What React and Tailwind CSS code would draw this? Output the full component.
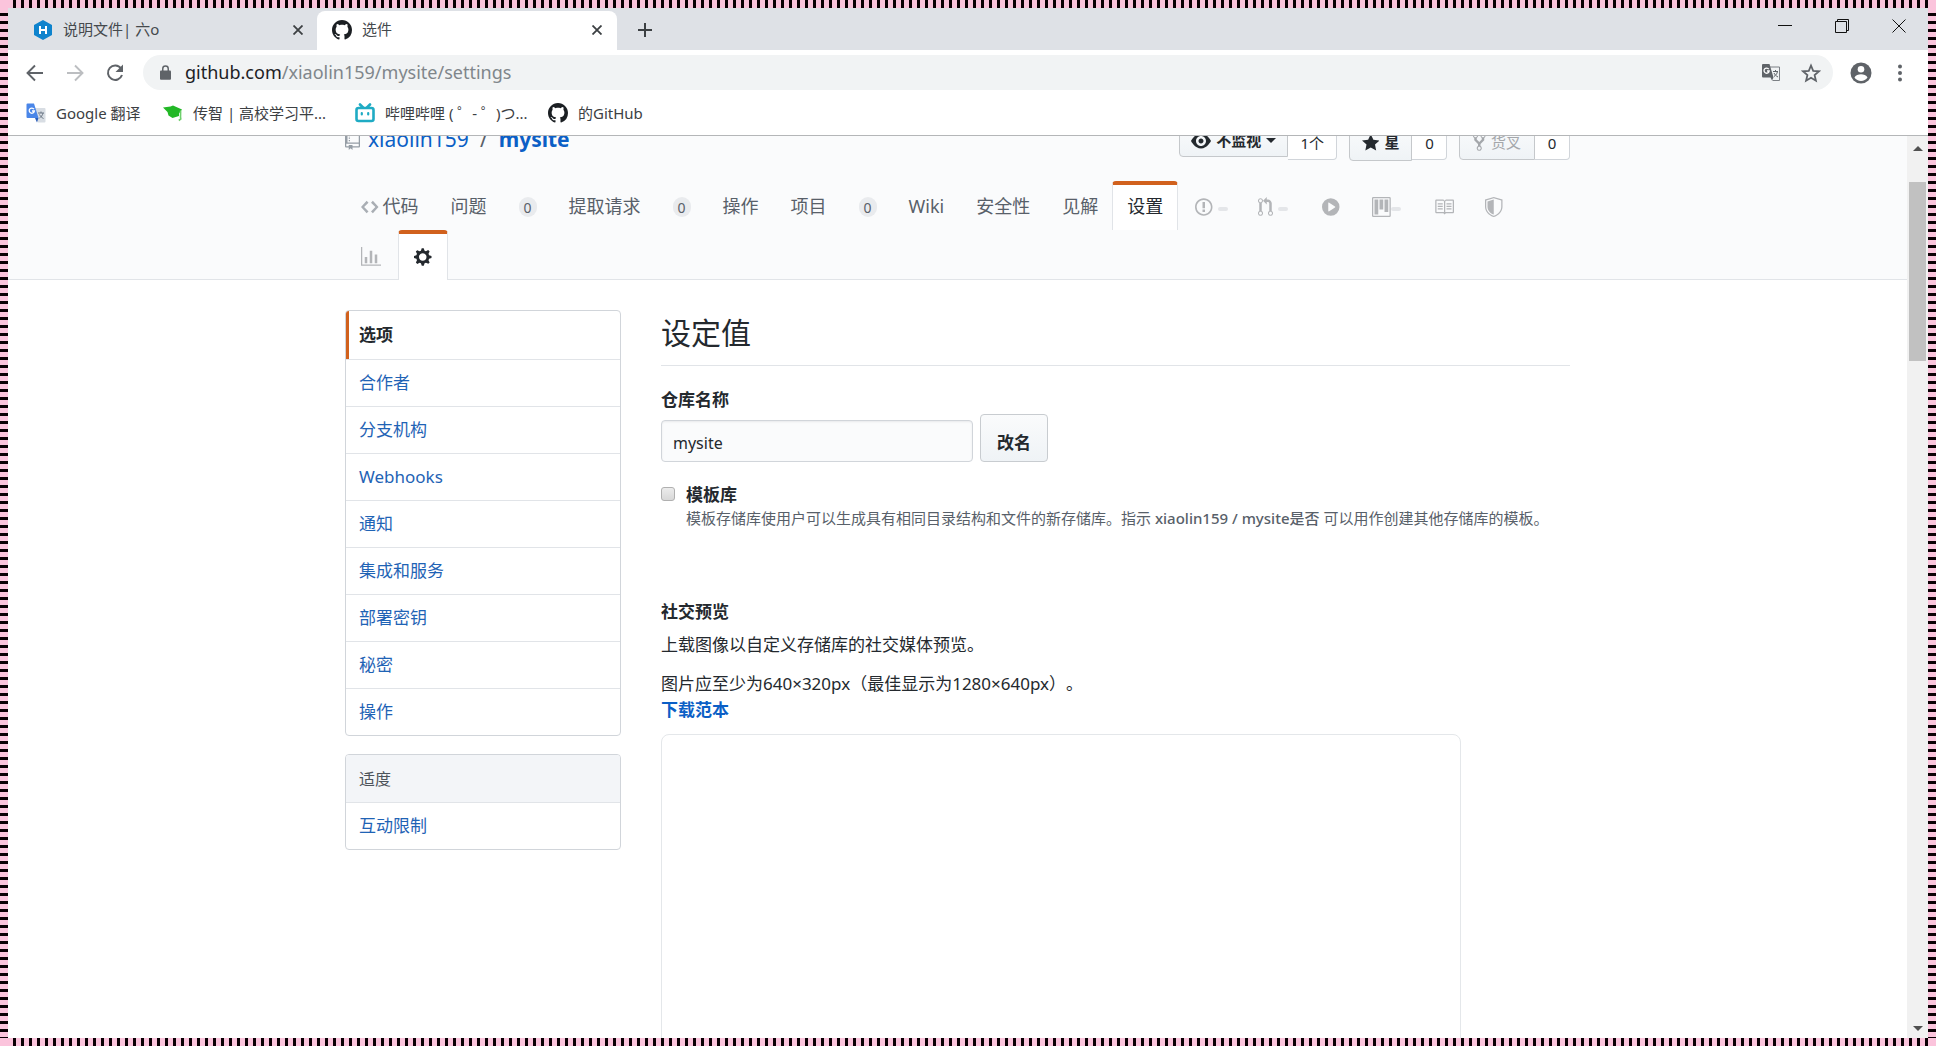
import React from "react";

const OCTICONS = {
  github: { w: 16, d: "M8 0C3.58 0 0 3.58 0 8c0 3.54 2.29 6.53 5.47 7.59.4.07.55-.17.55-.38 0-.19-.01-.82-.01-1.49-2.01.37-2.53-.49-2.69-.94-.09-.23-.48-.94-.82-1.13-.28-.15-.68-.52-.01-.53.63-.01 1.08.58 1.23.82.72 1.21 1.87.87 2.33.66.07-.52.28-.87.51-1.07-1.78-.2-3.64-.89-3.64-3.95 0-.87.31-1.59.82-2.15-.08-.2-.36-1.02.08-2.12 0 0 .67-.21 2.2.82.64-.18 1.32-.27 2-.27.68 0 1.36.09 2 .27 1.53-1.04 2.2-.82 2.2-.82.44 1.1.16 1.92.08 2.12.51.56.82 1.27.82 2.15 0 3.07-1.87 3.75-3.65 3.95.29.25.54.73.54 1.48 0 1.07-.01 1.93-.01 2.2 0 .21.15.46.55.38A8.013 8.013 0 0016 8c0-4.42-3.58-8-8-8z" },
  repo: { w: 12, d: "M4 9H3V8h1v1zm0-3H3v1h1V6zm0-2H3v1h1V4zm0-2H3v1h1V2zm8-1v12c0 .55-.45 1-1 1H6v2l-1.5-1.5L3 16v-2H1c-.55 0-1-.45-1-1V1c0-.55.45-1 1-1h10c.55 0 1 .45 1 1zm-1 10H1v2h2v-1h3v1h5v-2zm0-10H2v9h9V1z" },
  code: { w: 14, d: "M9.5 3L8 4.5 11.5 8 8 11.5 9.5 13 14 8 9.5 3zm-5 0L0 8l4.5 5L6 11.5 2.5 8 6 4.5 4.5 3z" },
  issue: { w: 14, d: "M7 2.3c3.14 0 5.7 2.56 5.7 5.7s-2.56 5.7-5.7 5.7A5.71 5.71 0 011.3 8c0-3.14 2.56-5.7 5.7-5.7zM7 1C3.14 1 0 4.14 0 8s3.14 7 7 7 7-3.14 7-7-3.14-7-7-7zm1 3H6v5h2V4zm0 6H6v2h2v-2z" },
  pull: { w: 12, d: "M11 11.28V5c-.03-.78-.34-1.47-.94-2.06C9.46 2.35 8.78 2.03 8 2H7V0L4 3l3 3V4h1c.27.02.48.11.69.31.21.2.3.42.31.69v6.28A1.993 1.993 0 0010 15a1.993 1.993 0 001-3.72zm-1 2.92c-.66 0-1.2-.55-1.2-1.2 0-.65.55-1.2 1.2-1.2.65 0 1.2.55 1.2 1.2 0 .65-.55 1.2-1.2 1.2zM4 3c0-1.11-.89-2-2-2a1.993 1.993 0 00-1 3.72v6.56A1.993 1.993 0 002 15a1.993 1.993 0 001-3.72V4.72c.59-.34 1-.98 1-1.72zm-.8 10c0 .66-.55 1.2-1.2 1.2-.65 0-1.2-.55-1.2-1.2 0-.65.55-1.2 1.2-1.2.65 0 1.2.55 1.2 1.2zM2 4.2C1.34 4.2.8 3.65.8 3c0-.65.55-1.2 1.2-1.2.65 0 1.2.55 1.2 1.2 0 .65-.55 1.2-1.2 1.2z" },
  play: { w: 14, d: "M14 8A7 7 0 110 8a7 7 0 0114 0zm-8.223 3.482l4.599-3.066a.5.5 0 000-.832L5.777 4.518A.5.5 0 005 4.934v6.132a.5.5 0 00.777.416z" },
  project: { w: 15, d: "M10 12h3V2h-3v10zm-4-2h3V2H6v8zm-4 4h3V2H2v12zm-1 1h13V1H1v14zM14 0H1a1 1 0 00-1 1v14a1 1 0 001 1h13a1 1 0 001-1V1a1 1 0 00-1-1z" },
  book: { w: 16, d: "M3 5h4v1H3V5zm0 3h4V7H3v1zm0 2h4V9H3v1zm11-5h-4v1h4V5zm0 2h-4v1h4V7zm0 2h-4v1h4V9zm2-6v9c0 .55-.45 1-1 1H9.5l-1 1-1-1H2c-.55 0-1-.45-1-1V3c0-.55.45-1 1-1h5.5l1 1 1-1H15c.55 0 1 .45 1 1zm-8 .5L7.5 3H2v9h6V3.5zm7-.5H9.5l-.5.5V12h6V3z" },
  shield: { w: 14, d: "M0 2l7-2 7 2v6.02C14 12.69 8.69 16 7 16c-1.69 0-7-3.31-7-7.98V2zm1 .75L7 1l6 1.75v5.268C13 12.104 8.449 15 7 15c-1.449 0-6-2.896-6-6.982V2.75zm1 .75L7 2v12c-1.207 0-5-2.482-5-5.985V3.5z" },
  graph: { w: 16, d: "M16 14v1H0V0h1v14h15zM5 13H3V8h2v5zm4 0H7V3h2v10zm4 0h-2V6h2v7z" },
  gear: { w: 14, d: "M14 8.77v-1.6l-1.94-.64-.45-1.09.88-1.84-1.13-1.13-1.81.91-1.09-.45-.69-1.92h-1.6l-.63 1.94-1.11.45-1.84-.88-1.13 1.13.91 1.81-.45 1.09L0 7.23v1.59l1.94.64.45 1.09-.88 1.84 1.13 1.13 1.81-.91 1.09.45.69 1.92h1.59l.63-1.94 1.11-.45 1.84.88 1.13-1.13-.92-1.81.47-1.09L14 8.75v.02zM7 11c-1.66 0-3-1.34-3-3s1.34-3 3-3 3 1.34 3 3-1.34 3-3 3z" },
  eye: { w: 16, d: "M8.06 2C3 2 0 8 0 8s3 6 8.06 6C13 14 16 8 16 8s-3-6-7.94-6zM8 12c-2.2 0-4-1.78-4-4 0-2.2 1.8-4 4-4 2.22 0 4 1.8 4 4 0 2.22-1.78 4-4 4zm2-4c0 1.11-.89 2-2 2-1.11 0-2-.89-2-2 0-1.11.89-2 2-2 1.11 0 2 .89 2 2z" },
  star: { w: 14, d: "M14 6l-4.9-.64L7 1 4.9 5.36 0 6l3.6 3.26L2.67 14 7 11.67 11.33 14l-.93-4.74L14 6z" },
  fork: { w: 10, d: "M8 1a1.993 1.993 0 00-1 3.72V6L5 8 3 6V4.72A1.993 1.993 0 002 1a1.993 1.993 0 00-1 3.72V6.5l3 3v1.78A1.993 1.993 0 005 15a1.993 1.993 0 001-3.72V9.5l3-3V4.72A1.993 1.993 0 008 1zM2 4.2C1.34 4.2.8 3.65.8 3c0-.65.55-1.2 1.2-1.2.65 0 1.2.55 1.2 1.2 0 .65-.55 1.2-1.2 1.2zm3 10c-.66 0-1.2-.55-1.2-1.2 0-.65.55-1.2 1.2-1.2.65 0 1.2.55 1.2 1.2 0 .65-.55 1.2-1.2 1.2zm3-10c-.66 0-1.2-.55-1.2-1.2 0-.65.55-1.2 1.2-1.2.65 0 1.2.55 1.2 1.2 0 .65-.55 1.2-1.2 1.2z" },
};

function Octicon({ name, className = "h-5" }) {
  const icon = OCTICONS[name];
  return (
    <svg viewBox={`0 0 ${icon.w} 16`} className={`shrink-0 fill-current ${className}`} aria-hidden="true">
      <path fillRule="evenodd" d={icon.d} />
    </svg>
  );
}

function HexoIcon() {
  return (
    <svg viewBox="0 0 18 20" className="w-[18px] shrink-0" aria-hidden="true">
      <path d="M9 0l9 5v10l-9 5-9-5V5z" fill="#0e83cd" />
      <path d="M6 6v8M12 6v8M6 10h6" stroke="#fff" strokeWidth="2" fill="none" />
    </svg>
  );
}

function TranslateIcon() {
  return (
    <svg viewBox="0 0 20 20" className="size-5 shrink-0" aria-hidden="true">
      <path d="M8 5h10.500a1 1 0 011 1v12.500a1 1 0 01-1 1H12z" fill="#d8dde3" />
      <path d="M12 10h6M15 8.500V10M17 10c-.5 2.500-2 4-3.500 5M13.500 11.500c.8 1.500 2 3 4 4" stroke="#6b7785" fill="none" />
      <path d="M1.500.5H8L12.500 15H1.500a1 1 0 01-1-1V1.500a1 1 0 011-1z" fill="#4a86e8" />
      <path d="M9 15h3.500L11 19.500z" fill="#2b5db8" />
      <path d="M8 6.200A2.600 2.600 0 108.400 8H6" stroke="#fff" strokeWidth="1.300" fill="none" />
    </svg>
  );
}

function TranslatePageIcon() {
  return (
    <svg viewBox="0 0 20 20" className="size-5 shrink-0" aria-hidden="true">
      <path d="M8 4h10.500v13.500H11.500" stroke="#7b7f84" fill="none" />
      <path d="M12 8.500h5M14.500 7v1.500M16.500 8.500c-.5 2.500-2 4-3.500 5M13 10c.8 1.500 2 3 4 4" stroke="#5f6368" fill="none" />
      <path d="M2 1h6.500l4 13.500-1.500 3-1.500-3H2a1 1 0 01-1-1V2a1 1 0 011-1z" fill="#5f6368" />
      <path d="M7.800 6.200A2.600 2.600 0 108.200 8H6" stroke="#fff" strokeWidth="1.300" fill="none" />
    </svg>
  );
}

function GraduationCapIcon() {
  return (
    <svg viewBox="0 0 20 18" className="w-5 shrink-0" aria-hidden="true">
      <path d="M0 3.500L7.500 2.500 10 1.500 19 5.500 16 9.500V12L9.500 14 5.500 11.500 4.500 8z" fill="#22b826" />
      <path d="M17.500 6.500c.5 3-.5 5.500.3 8.500l-2 1.500" stroke="#6fcf6d" strokeWidth="1.600" fill="none" />
    </svg>
  );
}

function BilibiliIcon() {
  return (
    <svg viewBox="0 0 20 20" className="size-5 shrink-0" fill="none" stroke="#1fabc4" strokeWidth="2.600" strokeLinecap="round" aria-hidden="true">
      <rect x="1.500" y="5" width="17" height="13" rx="2" />
      <path d="M5 1.500L8 4.500M15 1.500L12 4.500" />
      <path d="M6.800 10v1.500M13.200 10v1.500" strokeWidth="2.200" />
    </svg>
  );
}

function CloseGlyph() {
  return (
    <svg viewBox="0 0 10 10" className="size-[10px]" stroke="#3c4043" strokeWidth="1.800" aria-hidden="true">
      <path d="M.5.5l9 9M9.500.5l-9 9" />
    </svg>
  );
}

function TabStrip() {
  return (
    <div className="flex h-[42px] items-end bg-[#dee1e6] text-[15px] text-[#45494d]">
      <div className="flex h-[39px] w-[309px] items-center pr-[11px] pb-[2px] pl-[26px]">
        <HexoIcon />
        <span className="ml-[11px] flex-1">说明文件| 六o</span>
        <button type="button" aria-label="关闭标签页" className="grid size-4 place-items-center"><CloseGlyph /></button>
      </div>
      <div className="flex h-[39px] w-[300px] items-center rounded-t-lg bg-white pr-3 pb-[2px] pl-[15px]">
        <Octicon name="github" className="size-5 text-[#1b1f23]" />
        <span className="ml-[10px] flex-1">选件</span>
        <button type="button" aria-label="关闭标签页" className="grid size-4 place-items-center"><CloseGlyph /></button>
      </div>
      <button type="button" aria-label="新标签页" className="ml-5 grid h-[39px] w-4 place-items-center pb-[2px]">
        <svg viewBox="0 0 14 14" className="size-[14px]" stroke="#3c4043" strokeWidth="2" aria-hidden="true"><path d="M7 0v14M0 7h14" /></svg>
      </button>
      <div className="ml-auto flex h-full items-start gap-[43px] pt-[11px] pr-[22px]">
        <button type="button" aria-label="最小化" className="grid size-[14px] place-items-center">
          <svg viewBox="0 0 14 14" className="size-[14px]" stroke="#111" aria-hidden="true"><path d="M0 6.500h14" /></svg>
        </button>
        <button type="button" aria-label="还原" className="grid size-[14px] place-items-center">
          <svg viewBox="0 0 14 14" className="size-[14px]" stroke="#111" fill="none" aria-hidden="true"><path d="M.5 2.500h11v11H.5zM2.500 2.500v-2h11v11h-2" /></svg>
        </button>
        <button type="button" aria-label="关闭" className="grid size-[14px] place-items-center">
          <svg viewBox="0 0 14 14" className="size-[14px]" stroke="#111" aria-hidden="true"><path d="M.5.5l13 13M13.500.5l-13 13" /></svg>
        </button>
      </div>
    </div>
  );
}

function Toolbar() {
  return (
    <div className="flex h-[45px] items-center bg-white pr-[26px] pl-[17px] text-[#5f6368]">
      <div className="flex w-[118px] items-center gap-5">
        <button type="button" aria-label="后退">
          <svg viewBox="0 0 20 20" className="size-5" stroke="currentColor" strokeWidth="1.900" fill="none" aria-hidden="true"><path d="M18 10H3M10 2.500L2.500 10l7.500 7.500" /></svg>
        </button>
        <button type="button" aria-label="前进" className="text-[#bcbec1]">
          <svg viewBox="0 0 20 20" className="size-5" stroke="currentColor" strokeWidth="1.900" fill="none" aria-hidden="true"><path d="M2 10h15M10 2.500l7.500 7.500-7.500 7.500" /></svg>
        </button>
        <button type="button" aria-label="重新加载">
          <svg viewBox="0 0 20 20" className="size-5" aria-hidden="true">
            <path d="M16 5.500A7.200 7.200 0 1017 12" stroke="currentColor" strokeWidth="2" fill="none" />
            <path d="M18 1.500V9h-7.500z" fill="currentColor" />
          </svg>
        </button>
      </div>
      <div className="flex h-[35px] flex-1 items-center rounded-full bg-[#f1f3f4] pr-3 pl-[17px]">
        <svg viewBox="0 0 12 16" className="w-[11px] shrink-0" aria-hidden="true">
          <path d="M1 6h10a1 1 0 011 1v8a1 1 0 01-1 1H1a1 1 0 01-1-1V7a1 1 0 011-1z" fill="currentColor" />
          <path d="M3 7V4a3 3 0 016 0v3" stroke="currentColor" strokeWidth="1.600" fill="none" />
        </svg>
        <div className="ml-[14px] flex-1 text-[18px] text-[#80868b]"><span className="text-[#202124]">github.com</span>/xiaolin159/mysite/settings</div>
        <div className="flex items-center gap-5">
          <button type="button" aria-label="翻译此页"><TranslatePageIcon /></button>
          <button type="button" aria-label="收藏">
            <svg viewBox="0 0 20 20" className="size-5" stroke="currentColor" strokeWidth="1.800" fill="none" aria-hidden="true"><path d="M10 2.500l2.200 5.300 5.800.5-4.400 3.800 1.300 5.600L10 14.700l-4.900 3 1.300-5.600L2 8.300l5.800-.5z" /></svg>
          </button>
        </div>
      </div>
      <div className="ml-[17px] flex items-center gap-[26px]">
        <button type="button" aria-label="用户">
          <svg viewBox="0 0 22 22" className="size-[22px]" aria-hidden="true">
            <circle cx="11" cy="11" r="10.500" fill="currentColor" />
            <circle cx="11" cy="7.300" r="3.300" fill="#fff" />
            <path d="M4.500 15.500c1-2.300 4-3.200 6.500-3.200s5.500.9 6.500 3.200a7.700 7.700 0 01-13 0z" fill="#fff" />
          </svg>
        </button>
        <button type="button" aria-label="更多">
          <svg viewBox="0 0 4 18" className="h-[18px]" fill="currentColor" aria-hidden="true"><circle cx="2" cy="2.500" r="2" /><circle cx="2" cy="9" r="2" /><circle cx="2" cy="15.500" r="2" /></svg>
        </button>
      </div>
    </div>
  );
}

const BOOKMARKS = [
  { icon: <TranslateIcon />, label: "Google 翻译", width: "w-[137px]" },
  { icon: <GraduationCapIcon />, label: "传智 | 高校学习平...", width: "w-[192px]" },
  { icon: <BilibiliIcon />, label: "哔哩哔哩 ( ゜- ゜)つ...", width: "w-[193px]" },
  { icon: <Octicon name="github" className="size-5 text-[#1b1f23]" />, label: "的GitHub", width: "w-[110px]" },
];

function BookmarkBar() {
  return (
    <div className="flex h-[41px] items-center border-b border-[#b4b6b8] bg-white pb-1 pl-[18px] text-[15px] text-[#3c4043]">
      {BOOKMARKS.map((b) => (
        <a key={b.label} href="#" className={`flex shrink-0 items-center gap-[10px] whitespace-nowrap ${b.width}`}>
          {b.icon}
          <span>{b.label}</span>
        </a>
      ))}
    </div>
  );
}

function SocialButton({ icon, label, count, muted, caret, shape }) {
  return (
    <div className="flex items-start text-[15px]">
      <button
        type="button"
        className={`flex items-center gap-[5px] rounded-l border border-[#c5c8cb] bg-linear-to-b from-[#fafbfc] to-[#eff3f6] font-bold ${shape} ${muted ? "text-[#a4a7ab]" : "text-[#24292e]"}`}
      >
        <Octicon name={icon} />
        <span className={muted ? "font-normal" : ""}>{label}</span>
        {caret && <span className="border-x-5 border-t-5 border-x-transparent border-t-current" />}
      </button>
      <a href="#" className="flex h-9 min-w-[35px] items-center justify-center rounded-r border border-l-0 border-[#d1d5da] bg-white px-3 pt-[2px] text-[#24292e]">{count}</a>
    </div>
  );
}

function Counter({ children }) {
  return <span className="ml-8 grid h-5 w-[18px] place-items-center rounded-full bg-[#e9ebee] text-[14px]">{children}</span>;
}

const TABS = [
  { label: "代码", icon: "code" },
  { label: "问题", count: 0 },
  { label: "提取请求", count: 0 },
  { label: "操作" },
  { label: "项目", count: 0 },
  { label: "Wiki" },
  { label: "安全性" },
  { label: "见解" },
];

const ICON_TABS = [
  { icon: "issue", label: "问题", pill: true, width: "w-[63px]" },
  { icon: "pull", label: "提取请求", pill: true, width: "w-[64px]" },
  { icon: "play", label: "操作", width: "w-[50px]" },
  { icon: "project", label: "项目", pill: true, tight: true, width: "w-[62px]" },
  { icon: "book", label: "Wiki", width: "w-[51px]" },
  { icon: "shield", label: "安全性", width: "w-[34px]" },
];

function RepoHeader() {
  return (
    <header className="border-b border-[#e1e4e8] bg-[#fafbfc]">
      <div className="mx-auto w-full max-w-[1225px]">
        <div className="-mt-3 flex h-[57px] items-start">
          <h1 className="flex h-8 items-center text-[21px] text-[#586069]">
            <Octicon name="repo" className="h-5 text-[#959da5]" />
            <a href="#" className="ml-2 text-[#0b5fc6]">xiaolin159</a>
            <span className="mx-[11px]">/</span>
            <a href="#" className="font-bold text-[#0b5fc6]">mysite</a>
          </h1>
          <div className="ml-auto flex items-start gap-3">
            <SocialButton icon="eye" label="不监视" count="1个" caret shape="h-[33px] px-[11px]" />
            <SocialButton icon="star" label="星" count="0" shape="h-[37px] px-3" />
            <SocialButton icon="fork" label="货叉" count="0" muted shape="h-9 px-[13px]" />
          </div>
        </div>
        <nav aria-label="存储库">
          <div className="flex h-[49px] items-center pl-4 text-[18px] text-[#586069]">
            {TABS.map((t) => (
              <a key={t.label} href="#" className="mr-8 flex h-full shrink-0 items-center pt-[2px]">
                {t.icon && <Octicon name={t.icon} className="mr-1 h-5 text-[#a9aeb4]" />}
                {t.label}
                {t.count !== undefined && <Counter>{t.count}</Counter>}
              </a>
            ))}
            <a href="#" aria-current="page" className="-ml-[18px] flex h-full shrink-0 items-center rounded-t border-x border-t-4 border-x-[#e1e4e8] border-t-[#d1611d] bg-white px-[14px] pb-[2px] text-[#24292e]">设置</a>
            <div className="ml-[17px] flex h-full items-center pt-[2px] text-[#b3b5b8]">
              {ICON_TABS.map((t) => (
                <a key={t.icon} href="#" aria-label={t.label} className={`flex shrink-0 items-center ${t.width}`}>
                  <Octicon name={t.icon} />
                  {t.pill && <span className={`mt-1 h-1 w-[10px] rounded-full bg-[#e4e6e9] ${t.tight ? "" : "ml-[5px]"}`} />}
                </a>
              ))}
            </div>
          </div>
          <div className="-mb-px flex h-[50px] items-center">
            <a href="#" aria-label="见解" className="ml-4 w-[37px] pt-1 text-[#b3b5b8]"><Octicon name="graph" /></a>
            <a href="#" aria-label="设置" aria-current="page" className="grid h-full w-[50px] place-items-center rounded-t border-x border-t-4 border-x-[#e1e4e8] border-t-[#d1611d] bg-white text-[#24292e]"><Octicon name="gear" /></a>
          </div>
        </nav>
      </div>
    </header>
  );
}

const MENU = ["合作者", "分支机构", "Webhooks", "通知", "集成和服务", "部署密钥", "秘密", "操作"];

function Sidebar() {
  return (
    <aside className="mt-px w-[276px] shrink-0 text-[17px]">
      <nav aria-label="设置" className="overflow-hidden rounded border border-[#d1d5da]">
        <a href="#" aria-current="page" className="flex h-12 items-center border-l-3 border-[#d1611d] pl-[10px] font-bold text-[#24292e]">选项</a>
        {MENU.map((m) => (
          <a key={m} href="#" className="flex h-[47px] items-center border-t border-[#e1e4e8] pl-[13px] text-[#1f63b5]">{m}</a>
        ))}
      </nav>
      <nav aria-label="适度" className="mt-[18px] overflow-hidden rounded border border-[#d1d5da]">
        <h3 className="flex h-[47px] items-center bg-[#f3f5f8] pl-[13px] text-[16px] text-[#4d545b]">适度</h3>
        <a href="#" className="flex h-[47px] items-center border-t border-[#e1e4e8] pl-[13px] text-[#1f63b5]">互动限制</a>
      </nav>
    </aside>
  );
}

function Settings() {
  return (
    <main className="min-w-0 flex-1 text-[17px] text-[#24292e]">
      <h2 className="border-b border-[#e1e4e8] pt-1 pb-3 text-[30px] leading-10">设定值</h2>
      <form className="mt-[22px]">
        <label htmlFor="repo-name" className="block leading-6 font-bold">仓库名称</label>
        <div className="mt-[2px] flex items-end gap-[7px]">
          <input id="repo-name" defaultValue="mysite" className="h-[42px] w-[312px] rounded border border-[#d1d5da] bg-[#fafbfc] px-[11px] pt-1 text-[16px] shadow-[inset_0_1px_2px_rgba(27,31,35,0.075)]" />
          <button type="button" className="h-12 rounded border border-[#c8ccd0] bg-linear-to-b from-[#fafbfc] to-[#eff3f6] px-4 pt-[10px] font-bold">改名</button>
        </div>
        <div className="mt-[21px] flex gap-[11px]">
          <input id="template" type="checkbox" className="mt-1 size-[14px] shrink-0 appearance-none rounded-[3px] border border-[#b0b0b0] bg-linear-to-b from-[#ececec] to-[#d8d8d8]" />
          <div>
            <label htmlFor="template" className="block leading-6 font-bold">模板库</label>
            <p className="text-[15px] leading-[22px] text-[#586069]">
              模板存储库使用户可以生成具有相同目录结构和文件的新存储库。指示 <strong className="font-medium">xiaolin159 / mysite是否</strong> 可以用作创建其他存储库的模板。
            </p>
          </div>
        </div>
      </form>
      <section className="mt-[71px]">
        <h4 className="leading-6 font-bold">社交预览</h4>
        <p className="mt-[9px] leading-6">上载图像以自定义存储库的社交媒体预览。</p>
        <p className="mt-[15px] leading-6 [text-spacing-trim:space-all]">图片应至少为640×320px（最佳显示为1280×640px）。</p>
        <a href="#" className="mt-[2px] block leading-6 font-bold text-[#0b5fc6]">下载范本</a>
        <div className="mt-3 h-[400px] w-full max-w-[800px] rounded-lg border border-[#e4e7ea]" />
      </section>
    </main>
  );
}

function Scrollbar() {
  return (
    <div className="flex w-[21px] shrink-0 flex-col items-center bg-[#f1f1f1] pt-[10px] pb-[7px]" aria-hidden="true">
      <span className="border-x-5 border-b-5 border-x-transparent border-b-[#505050]" />
      <span className="mt-[31px] h-[179px] w-[17px] bg-[#c1c1c1]" />
      <span className="mt-auto border-x-5 border-t-5 border-x-transparent border-t-[#505050]" />
    </div>
  );
}

function HorizontalTrim() {
  return (
    <div className="h-2 shrink-0 bg-[#fbc4dc] px-2" aria-hidden="true">
      <div className="h-full bg-[repeating-linear-gradient(90deg,#fbc4dc_0px,#fbc4dc_5px,#0a0004_5px,#0a0004_8px)]" />
    </div>
  );
}

function VerticalTrim() {
  return <div className="w-2 shrink-0 bg-[repeating-linear-gradient(180deg,#fbc4dc_0px,#fbc4dc_5px,#0a0004_5px,#0a0004_8px)]" aria-hidden="true" />;
}

export default function App() {
  return (
    <div className="flex h-screen flex-col overflow-hidden bg-white font-['Noto_Sans','Noto_Sans_CJK_SC',sans-serif]">
      <HorizontalTrim />
      <div className="flex min-h-0 flex-1">
        <VerticalTrim />
        <div className="flex min-w-0 flex-1 flex-col">
          <TabStrip />
          <Toolbar />
          <BookmarkBar />
          <div className="flex min-h-0 flex-1">
            <div className="min-w-0 flex-1 overflow-hidden">
              <RepoHeader />
              <div className="mx-auto mt-[29px] flex w-full max-w-[1225px] gap-10">
                <Sidebar />
                <Settings />
              </div>
            </div>
            <Scrollbar />
          </div>
        </div>
        <VerticalTrim />
      </div>
      <HorizontalTrim />
    </div>
  );
}
